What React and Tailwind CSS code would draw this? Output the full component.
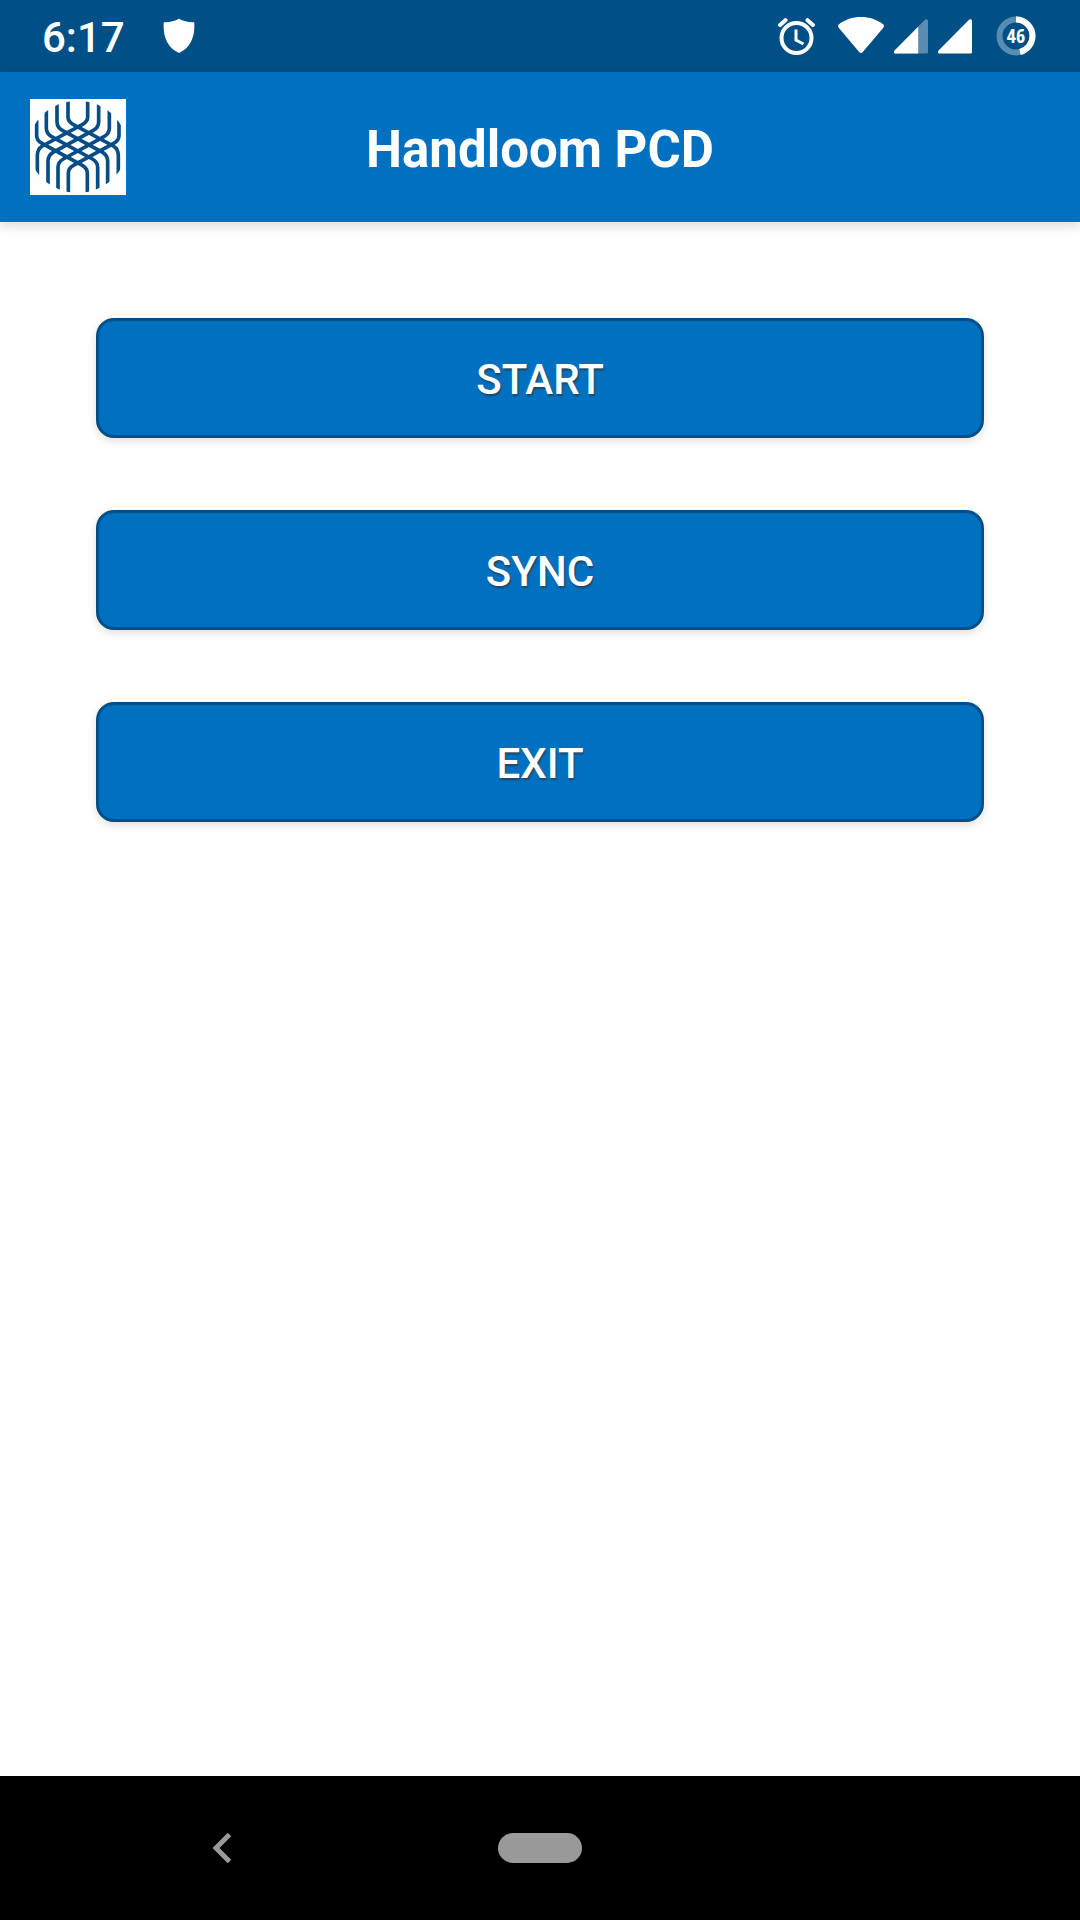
import React from 'react';

const MENU_ITEMS = ['START', 'SYNC', 'EXIT'];

const ShieldIcon = () => (
  <svg className="h-[36px] w-[32px]" viewBox="0 0 32 36" fill="white" aria-hidden="true">
    <path d="M16 0.8 C12 3.2 6.5 4.4 0.8 4.2 C-0.2 16 3 29 16 35 C29 29 32.2 16 31.2 4.2 C25.5 4.4 20 3.2 16 0.8 Z" />
  </svg>
);

const AlarmIcon = () => (
  <svg className="h-[38px] w-[38px]" viewBox="0 0 38 38" fill="none" stroke="white" aria-hidden="true">
    <circle cx="18.5" cy="21" r="15" strokeWidth="4" />
    <path d="M2.1 8 L7.5 3.2 M34.9 8 L29.5 3.2" strokeWidth="4" strokeLinecap="round" />
    <path d="M18 12.5 V23 L25.5 27" strokeWidth="3" />
  </svg>
);

const WifiIcon = () => (
  <svg className="h-[38px] w-[46px]" viewBox="0 0 46 38" fill="white" aria-hidden="true">
    <path d="M1 7.2 C7 2.6 14.5 0 23 0 C31.5 0 39 2.6 45 7.2 C46.2 8.3 46.2 9.6 45.3 10.7 L24.6 35.2 C23.6 36.3 22.4 36.3 21.4 35.2 L0.7 10.7 C-0.2 9.6 -0.2 8.3 1 7.2 Z" />
  </svg>
);

const SIGNAL_PATH = 'M1.6 34.5 H32.5 Q34 34.5 34 33 V2 C34 0 32 -0.2 31 0.8 L0.6 31.6 C-0.6 33 0 34.5 1.6 34.5 Z';

const SignalIcon = ({ partial }) => (
  <svg className="h-[35px] w-[34px]" viewBox="0 0 34 35" aria-hidden="true">
    <path d={SIGNAL_PATH} fill="white" fillOpacity={partial ? 0.35 : 1} />
    {partial && <path d="M1.6 34.5 H24.2 V7.7 L0.6 31.6 C-0.6 33 0 34.5 1.6 34.5 Z" fill="white" />}
  </svg>
);

const BatteryIcon = ({ level }) => (
  <svg className="h-[40px] w-[40px]" viewBox="0 0 40 40" role="img" aria-label={`Battery ${level}%`}>
    <circle cx="20" cy="20" r="16.5" fill="none" stroke="white" strokeOpacity="0.35" strokeWidth="6" />
    <circle
      cx="20"
      cy="20"
      r="16.5"
      fill="none"
      stroke="white"
      strokeWidth="6"
      pathLength="100"
      strokeDasharray={`${level} 100`}
      transform="rotate(-90 20 20)"
    />
    <text
      x="20"
      y="27"
      textAnchor="middle"
      fill="white"
      className="font-['Open_Sans_Condensed','Noto_Sans_Condensed','Roboto_Condensed',Roboto,sans-serif] text-[20px] font-bold"
    >
      {level}
    </text>
  </svg>
);

// Warp threads of the logo, the other four are the same ones mirrored
const LOGO_THREADS = [
  'M114 0 V54 Q114 67 129 76 L250 141 Q265 150 265 170 V228',
  'M81 10 V68 Q81 85 97 94 L218 160 Q233 169 233 187 V262',
  'M49 28 V88 Q49 104 65 113 L187 180 Q203 189 203 205 V282',
  'M20 64 V110 Q20 124 36 133 L157 199 Q172 208 172 222 V288'
];

const Logo = () => (
  <svg className="h-24 w-24 bg-white" viewBox="0 0 288 288" fill="none" stroke="#064d88" strokeWidth="11" role="img" aria-label="Handloom PCD logo">
    <clipPath id="logo-round">
      <ellipse cx="143" cy="143" rx="147" ry="138" />
    </clipPath>
    <g clipPath="url(#logo-round)">
      {LOGO_THREADS.map((d) => (
        <g key={d}>
          <path d={d} />
          <path d={d} transform="translate(287 0) scale(-1 1)" />
        </g>
      ))}
    </g>
  </svg>
);

const StatusBar = () => (
  <div className="flex h-[72px] items-center justify-between bg-[#004f87] pr-[44px] pl-[42px] text-white">
    <div className="flex items-center gap-[38px]">
      <span className="pt-1 text-[42px] leading-[48px] font-medium">6:17</span>
      <ShieldIcon />
    </div>
    <div className="flex items-center">
      <AlarmIcon />
      <div className="ml-[22px] flex items-center gap-[10px]">
        <WifiIcon />
        <SignalIcon partial />
        <SignalIcon />
      </div>
      <div className="ml-[24px] flex">
        <BatteryIcon level={46} />
      </div>
    </div>
  </div>
);

const AppBar = () => (
  <header className="grid h-[150px] grid-cols-[1fr_auto_1fr] items-center bg-[#0071c1] px-[30px] shadow-[0_4px_12px_rgba(0,0,0,0.15)]">
    <Logo />
    <h1 className="pt-[6px] text-[51px] leading-[60px] font-bold text-white">Handloom PCD</h1>
  </header>
);

const MenuButton = ({ children }) => (
  <button
    type="button"
    className="h-[120px] w-full rounded-[18px] border-3 border-[#004f87] bg-[#0071c1] pt-1 text-[42px] leading-[48px] font-medium text-white shadow-[0_3px_8px_rgba(0,0,0,0.13)] text-shadow-[1px_2px_2px_rgba(50,50,50,0.7)]"
  >
    {children}
  </button>
);

const NavigationBar = () => (
  <nav className="grid h-[144px] grid-cols-[1fr_auto_1fr] items-center bg-black">
    <div className="flex justify-center pr-[54px]">
      <button type="button" aria-label="Back">
        <svg className="h-[30px] w-[20px]" viewBox="0 0 20 30" fill="none" stroke="#999999" strokeWidth="5">
          <path d="M17.5 1.5 L4 15 L17.5 28.5" />
        </svg>
      </button>
    </div>
    <button type="button" aria-label="Home" className="h-[30px] w-[84px] rounded-full bg-[#999999]" />
  </nav>
);

export default function App() {
  return (
    <div className="flex min-h-screen flex-col bg-white font-[Roboto,sans-serif]">
      <StatusBar />
      <AppBar />
      <main className="flex flex-1 flex-col gap-[72px] px-24 py-24">
        {MENU_ITEMS.map((item) => (
          <MenuButton key={item}>{item}</MenuButton>
        ))}
      </main>
      <NavigationBar />
    </div>
  );
}
